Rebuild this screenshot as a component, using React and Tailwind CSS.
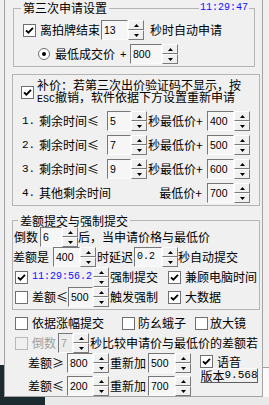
import React from 'react'

const Check = ({ on, dis, className = '' }) => (
    <span className={`w-[13px] h-[13px] shrink-0 flex items-center justify-center border ${dis ? 'border-[#b8b8b8] bg-[#f0f0f0]' : 'border-[#6f6f6f] bg-white'} ${className}`}>
        {on && (
            <svg width="9" height="9" viewBox="0 0 9 9">
                <path d="M1 4.3 L3.4 6.7 L8 1.9" fill="none" stroke="#000" strokeWidth="1.9" />
            </svg>
        )}
    </span>
)

const Radio = ({ className = '' }) => (
    <span className={`w-[12px] h-[12px] shrink-0 rounded-full border border-[#6f6f6f] bg-white flex items-center justify-center ${className}`}>
        <span className="w-[4px] h-[4px] rounded-full bg-black" />
    </span>
)

const Spin = () => (
    <div className="w-[16px] h-[20px] shrink-0 flex flex-col">
        <div className="flex-1 flex items-center justify-center bg-[#f0f0f0] border border-t-white border-l-white border-b-[#7a7a7a] border-r-[#7a7a7a]">
            <svg width="5" height="3" viewBox="0 0 5 3"><path d="M2.5 0 L5 3 H0 Z" fill="#000" /></svg>
        </div>
        <div className="flex-1 flex items-center justify-center bg-[#f0f0f0] border border-t-white border-l-white border-b-[#7a7a7a] border-r-[#7a7a7a]">
            <svg width="5" height="3" viewBox="0 0 5 3"><path d="M0 0 H5 L2.5 3 Z" fill="#000" /></svg>
        </div>
    </div>
)

const Edit = ({ w, children, mono, dis, className = '' }) => (
    <div className={`h-[20px] shrink-0 flex items-center pl-[2px] border border-t-[#777] border-l-[#777] border-b-[#fcfcfc] border-r-[#fcfcfc] ${dis ? 'bg-[#ececec] text-[#9a9a9a]' : 'bg-[#f6f6f6] text-black'} ${mono ? "font-['Liberation_Mono',monospace] text-[10px]" : "font-['Liberation_Sans',sans-serif] text-[10.5px]"} ${w} ${className}`}>
        {children}
    </div>
)

const Row = ({ children, className = '' }) => (
    <div className={`flex items-center h-[20px] whitespace-nowrap leading-[20px] ${className}`}>{children}</div>
)

function App() {
    return (
        <div className="w-[269px] h-[405px] overflow-hidden bg-[#f0f0f0] flex flex-col text-[12px] text-black font-['Noto_Sans_CJK_SC',sans-serif]">
            <div className="flex h-[397px]">
                <div className="w-[4px] flex flex-col">
                    <div className="h-[365px]" />
                    <div className="flex-1 bg-[#1c2b30]" />
                </div>

                <div className="w-[259px] border-l border-r border-b border-[#a3a3a3] flex flex-col">
                    {/* 第三次申请设置 */}
                    <div className="ml-[8px] w-[242px] flex flex-col">
                        <div className="flex items-end h-[15px]">
                            <div className="w-[8px] h-[7px] border-l border-t border-[#b5b5b5]" />
                            <span className="px-[2px] leading-[15px]">第三次申请设置</span>
                            <div className="flex-1 h-[7px] border-t border-[#b5b5b5]" />
                            <span className="px-[1px] leading-[15px] text-[10px] text-[#1010ff] font-['Liberation_Mono',monospace]">11:29:47</span>
                            <div className="w-[6px] h-[7px] border-t border-r border-[#b5b5b5]" />
                        </div>
                        <div className="border-l border-r border-b border-[#b5b5b5] pt-[5px] pb-[2px] flex flex-col gap-[4px]">
                            <Row>
                                <Check on className="ml-[9px]" />
                                <span className="ml-[4px]">离拍牌结束</span>
                                <Edit w="w-[27px]" className="ml-[1px]">13</Edit>
                                <Spin />
                                <span className="ml-[6px]">秒时自动申请</span>
                            </Row>
                            <Row>
                                <Radio className="ml-[24px]" />
                                <span className="ml-[5px]">最低成交价</span>
                                <span className="ml-[5px] w-[8px] text-[11px] font-['Liberation_Sans',sans-serif]">+</span>
                                <Edit w="w-[32px]" className="ml-[2px]">800</Edit>
                                <Spin />
                            </Row>
                        </div>
                    </div>

                    {/* 补价 */}
                    <div className="mt-[7px] ml-[7px] w-[248px] border border-[#b5b5b5] pt-[4px] pb-[2px] flex flex-col">
                        <div className="flex items-center">
                            <Check on className="ml-[8px]" />
                            <div className="ml-[3px] leading-[12px] whitespace-nowrap">
                                <div>补价：若第三次出价验证码不显示，按</div>
                                <div><span className="text-[10px] font-['Liberation_Mono',monospace]">ESC</span>撤销，软件依据下方设置重新申请</div>
                            </div>
                        </div>
                        <div className="mt-[5px] flex flex-col gap-[4px]">
                            {[['1.', '5', '400'], ['2.', '7', '500'], ['3.', '9', '600']].map(([n, s, p]) => (
                                <Row key={n}>
                                    <span className="ml-[9px] w-[17px] text-[11px] font-['Liberation_Mono',monospace]">{n}</span>
                                    <span className="w-[68px]">剩余时间≤</span>
                                    <Edit w="w-[24px]">{s}</Edit>
                                    <Spin />
                                    <span className="ml-[1px] w-[56px]">秒最低价+</span>
                                    <Edit w="w-[27px]" className="ml-[3px]">{p}</Edit>
                                    <Spin />
                                </Row>
                            ))}
                            <Row>
                                <span className="ml-[9px] w-[17px] text-[11px] font-['Liberation_Mono',monospace]">4.</span>
                                <span className="w-[109px]">其他剩余时间</span>
                                <span className="w-[56px] pr-[2px] text-right">最低价+</span>
                                <Edit w="w-[27px]" className="ml-[3px]">700</Edit>
                                <Spin />
                            </Row>
                        </div>
                    </div>

                    {/* 差额提交与强制提交 */}
                    <div className="mt-[8px] ml-[7px] w-[248px] flex flex-col">
                        <div className="flex items-end h-[13px]">
                            <div className="w-[6px] h-[7px] border-l border-t border-[#b5b5b5]" />
                            <span className="px-[2px] leading-[13px]">差额提交与强制提交</span>
                            <div className="flex-1 h-[7px] border-t border-r border-[#b5b5b5]" />
                        </div>
                        <div className="border-l border-r border-b border-[#b5b5b5] pb-[2px] flex flex-col">
                            <Row>
                                <span className="ml-[1px]">倒数</span>
                                <Edit w="w-[22px]" className="ml-[2px]">6</Edit>
                                <Spin />
                                <span>后，当申请价格与最低价</span>
                            </Row>
                            <Row>
                                <span>差额是</span>
                                <Edit w="w-[27px]" className="ml-[4px]">400</Edit>
                                <Spin />
                                <span className="ml-[1px]">时延迟</span>
                                <Edit w="w-[28px]" mono className="ml-[1px]">0.2</Edit>
                                <Spin />
                                <span>秒自动提交</span>
                            </Row>
                            <Row>
                                <Check on className="ml-[2px]" />
                                <span className="ml-[4px] w-[61px] text-[10px] text-[#1010ff] font-['Liberation_Mono',monospace]">11:29:56.2</span>
                                <Spin />
                                <span className="ml-[1px]">强制提交</span>
                                <Check on className="ml-[10px]" />
                                <span className="ml-[4px]">兼顾电脑时间</span>
                            </Row>
                            <Row>
                                <Check className="ml-[2px]" />
                                <span className="ml-[4px] w-[36px]">差额≤</span>
                                <Edit w="w-[25px]">500</Edit>
                                <Spin />
                                <span className="ml-[1px]">触发强制</span>
                                <Check on className="ml-[10px]" />
                                <span className="ml-[4px]">大数据</span>
                            </Row>
                        </div>
                    </div>

                    <Row className="mt-[3px]">
                        <Check className="ml-[10px]" />
                        <span className="ml-[4px]">依据涨幅提交</span>
                        <Check className="ml-[18px]" />
                        <span className="ml-[3px]">防幺蛾子</span>
                        <Check className="ml-[9px]" />
                        <span className="ml-[2px]">放大镜</span>
                    </Row>
                    <Row className="h-[19px]">
                        <Check dis className="ml-[10px]" />
                        <span className="ml-[4px] text-[#a0a0a0]">倒数</span>
                        <Edit w="w-[15px]" dis className="ml-[2px]">7</Edit>
                        <Spin />
                        <span className="ml-[1px]">秒比较申请价与最低价的差额若</span>
                    </Row>
                    <div className="flex">
                        <div className="flex flex-col gap-[3px]">
                            {[['差额≥', '800', '500'], ['差额≤', '200', '700']].map(([t, a, b]) => (
                                <Row key={t}>
                                    <span className="ml-[23px] w-[39px]">{t}</span>
                                    <Edit w="w-[26px]">{a}</Edit>
                                    <Spin />
                                    <span className="ml-[1px]">重新加</span>
                                    <Edit w="w-[27px]" className="ml-[2px]">{b}</Edit>
                                    <Spin />
                                </Row>
                            ))}
                        </div>
                        <div className="ml-[9px] flex flex-col">
                            <div className="mt-[2px] flex items-center h-[13px]">
                                <Check on />
                                <span className="ml-[4px] leading-[13px]">语音</span>
                            </div>
                            <div className="w-[58px] h-[15px] flex items-center justify-center whitespace-nowrap leading-[13px] bg-[#f0f0f0] border border-t-white border-l-white border-b-[#5f5f5f] border-r-[#5f5f5f]">
                                版本<span className="text-[11px] font-['Liberation_Mono',monospace]">9.568</span>
                            </div>
                        </div>
                    </div>
                </div>

                <div className="flex-1 flex flex-col">
                    <div className="h-[368px] border-b border-[#a3a3a3]" />
                    <div className="flex-1 bg-[#fafafa]" />
                </div>
            </div>
            <div className="flex flex-1">
                <div className="w-[45px] bg-[#1c2b30]" />
                <div className="flex-1 bg-[#e9e9e9]" />
            </div>
        </div>
    )
}

export default App
